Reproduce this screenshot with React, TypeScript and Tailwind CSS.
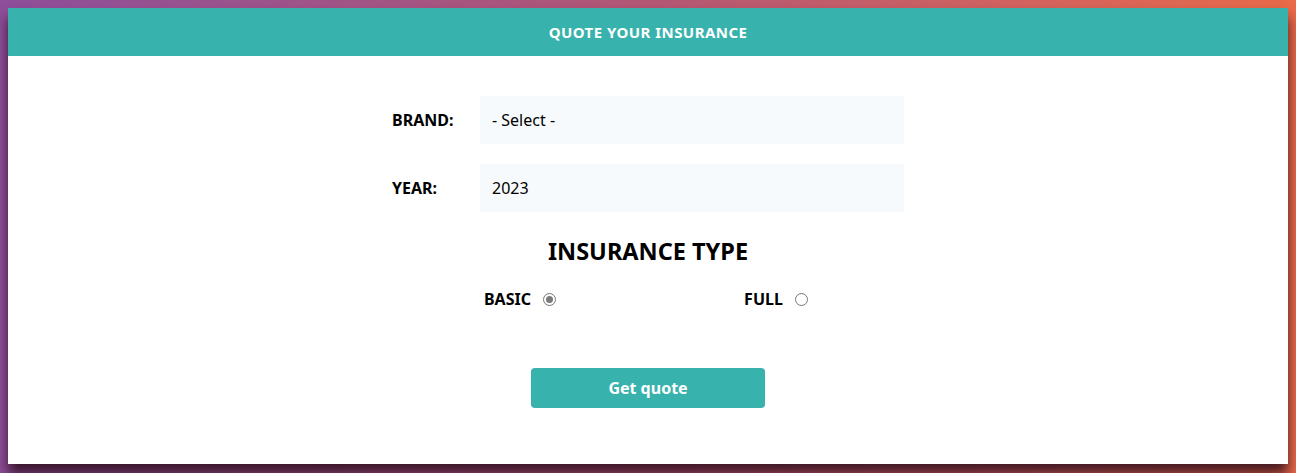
import React, { useState } from 'react'

const font = { fontFamily: '"Noto Sans", "Open Sans", sans-serif' }

function Radio({ label, checked, onClick }: { label: string; checked: boolean; onClick: () => void }) {
  return (
    <label className="flex items-center gap-3 cursor-pointer" onClick={onClick}>
      <span className="text-base font-bold text-black">{label}</span>
      <span className="w-[13px] h-[13px] rounded-full border border-[#767676] bg-white flex items-center justify-center">
        {checked && <span className="w-[7px] h-[7px] rounded-full bg-[#7a7a7a]" />}
      </span>
    </label>
  )
}

export default function App() {
  const [plan, setPlan] = useState('basic')

  return (
    <div
      className="min-h-screen p-2 bg-gradient-to-r from-[#8f4f9b] via-[#b45775] to-[#ea6a48]"
      style={font}
    >
      <div className="bg-white shadow-[0_10px_12px_rgba(40,10,25,0.85)]">
        <header className="h-12 bg-[#38b2ac] flex items-center justify-center">
          <h1 className="text-[15px] font-bold text-white tracking-[0.03em]">QUOTE YOUR INSURANCE</h1>
        </header>

        <form className="w-[512px] mx-auto pt-10 pb-14" onSubmit={e => e.preventDefault()}>
          <div className="flex items-center">
            <label className="w-[88px] text-base font-bold text-black">BRAND:</label>
            <div className="flex-1 h-12 bg-[#f7fafc] flex items-center px-3 text-base text-black">- Select -</div>
          </div>

          <div className="flex items-center mt-5">
            <label className="w-[88px] text-base font-bold text-black">YEAR:</label>
            <div className="flex-1 h-12 bg-[#f7fafc] flex items-center px-3 text-base text-black">2023</div>
          </div>

          <h2 className="text-center text-[23.5px] font-bold text-black mt-[23px] leading-8">INSURANCE TYPE</h2>

          <div className="flex mt-[20px]">
            <div className="flex-1 flex justify-center">
              <Radio label="BASIC" checked={plan === 'basic'} onClick={() => setPlan('basic')} />
            </div>
            <div className="flex-1 flex justify-center">
              <Radio label="FULL" checked={plan === 'full'} onClick={() => setPlan('full')} />
            </div>
          </div>

          <div className="flex justify-center mt-[57px]">
            <button
              type="submit"
              className="w-[234px] h-10 rounded bg-[#38b2ac] text-white font-bold text-base"
            >
              Get quote
            </button>
          </div>
        </form>
      </div>
    </div>
  )
}
